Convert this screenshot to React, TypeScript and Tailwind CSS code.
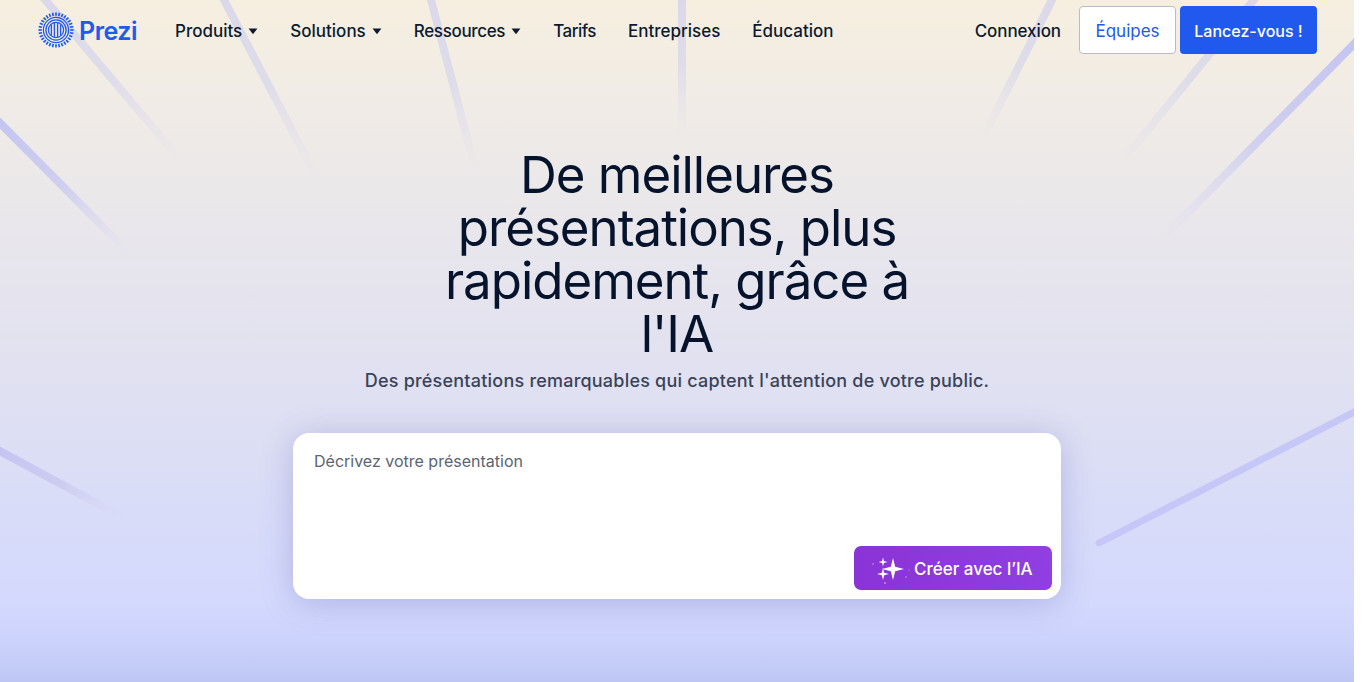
const navItems = [
  { label: "Produits", caret: true, tracking: "tracking-normal" },
  { label: "Solutions", caret: true, tracking: "tracking-normal" },
  { label: "Ressources", caret: true, tracking: "tracking-[-0.02em]" },
  { label: "Tarifs", caret: false, tracking: "tracking-[-0.03em]" },
  { label: "Entreprises", caret: false, tracking: "tracking-normal" },
  { label: "Éducation", caret: false, tracking: "tracking-normal" },
]

// x1 y1 is the strong end, x2 y2 is the end that fades out
const rays = [
  { id: "a", x1: 42, y1: -4, x2: 182, y2: 162, o: 0.55 },
  { id: "b", x1: 222, y1: -4, x2: 316, y2: 176, o: 0.55 },
  { id: "c", x1: 430, y1: -4, x2: 476, y2: 172, o: 0.55 },
  { id: "d", x1: 682, y1: -4, x2: 682, y2: 136, o: 0.55 },
  { id: "e", x1: 1054, y1: -4, x2: 983, y2: 138, o: 0.55 },
  { id: "f", x1: 1257, y1: -4, x2: 1120, y2: 164, o: 0.55 },
  { id: "g", x1: 1358, y1: 40, x2: 1163, y2: 238, o: 1 },
  { id: "h", x1: -4, y1: 119, x2: 128, y2: 252, o: 1 },
  { id: "i", x1: -4, y1: 449, x2: 124, y2: 518, o: 1 },
]

const Rays = () => (
  <svg className="absolute inset-0 h-full w-full" viewBox="0 0 1354 682" fill="none">
    <defs>
      {rays.map((r) => (
        <linearGradient key={r.id} id={`ray-${r.id}`} gradientUnits="userSpaceOnUse" x1={r.x1} y1={r.y1} x2={r.x2} y2={r.y2}>
          <stop offset="0" stopColor="#c4c4f2" stopOpacity={r.o} />
          <stop offset="0.5" stopColor="#c8c8f0" stopOpacity={r.o * 0.8} />
          <stop offset="1" stopColor="#d4d4f0" stopOpacity="0" />
        </linearGradient>
      ))}
    </defs>
    {rays.map((r) => (
      <line key={r.id} x1={r.x1} y1={r.y1} x2={r.x2} y2={r.y2} stroke={`url(#ray-${r.id})`} strokeWidth="8" />
    ))}
    <line x1="1360" y1="409" x2="1099" y2="543" stroke="#c6c7f6" strokeWidth="7" strokeLinecap="round" />
  </svg>
)

const Logo = () => {
  const ticks = Array.from({ length: 32 }, (_, i) => (i * 360) / 32)
  return (
    <svg width="36" height="36" viewBox="0 0 36 36" fill="none" stroke="#2159ee">
      {ticks.map((deg) => (
        <line key={deg} x1="18" y1="0.4" x2="18" y2="3.8" strokeWidth="1.7" transform={`rotate(${deg} 18 18)`} />
      ))}
      <circle cx="18" cy="18" r="12.6" strokeWidth="1.3" />
      <circle cx="18" cy="18" r="10.1" strokeWidth="1.3" />
      <circle cx="18" cy="18" r="7.6" strokeWidth="1.3" />
      <path d="M13.4 12.6v10.8M16.4 10.6v14.8M19.6 10.6v14.8M22.6 12.6v10.8" strokeWidth="1.4" />
    </svg>
  )
}

const Caret = () => (
  <svg width="10" height="6" viewBox="0 0 10 6" className="mb-[2px]">
    <path d="M0.6 0.4h8.8L5.8 5.2a1 1 0 0 1-1.6 0z" fill="#0c1a30" />
  </svg>
)

const star = (cx: number, cy: number, r: number) => {
  const k = r * 0.2
  return `M${cx} ${cy - r}L${cx + k} ${cy - k}L${cx + r} ${cy}L${cx + k} ${cy + k}L${cx} ${cy + r}L${cx - k} ${cy + k}L${cx - r} ${cy}L${cx - k} ${cy - k}Z`
}

const Sparkles = () => (
  <svg width="40" height="40" viewBox="0 0 40 40" fill="#fff">
    <path d={star(23, 21, 11)} />
    <path d={star(13, 14, 4.5)} />
    <path d={star(13, 26, 6)} />
    <circle cx="3" cy="16" r="1" opacity="0.3" />
    <circle cx="15" cy="35" r="1" opacity="0.45" />
    <circle cx="36" cy="29" r="1" opacity="0.3" />
    <circle cx="39" cy="22" r="0.8" opacity="0.25" />
  </svg>
)

export default function App() {
  return (
    <div className="flex h-[682px] w-full overflow-hidden bg-white font-['Inter',sans-serif] text-[#0c1a30]">
      <div className="relative h-full flex-1 overflow-hidden bg-[linear-gradient(180deg,#f6efe0_0px,#ebe8ea_190px,#dfe0f2_400px,#d4d9fd_600px,#ccd3fc_640px,#bec7f4_682px)]">
        <Rays />

        <header className="relative flex h-[60px] items-center pl-[38px] pr-[37px]">
          <a className="flex items-center gap-[5px]">
            <Logo />
            <span className="pt-[2px] text-[25px] font-semibold leading-none tracking-[-0.02em] text-[#2159ee]">Prezi</span>
          </a>
          <nav className="ml-[38px] flex items-center gap-[32px] pt-[4px]">
            {navItems.map((item) => (
              <a key={item.label} className={`flex items-center gap-[6px] text-[17px] font-medium ${item.tracking}`}>
                {item.label}
                {item.caret && <Caret />}
              </a>
            ))}
          </nav>
          <a className="ml-auto mr-[18px] pt-[4px] text-[17px] font-medium tracking-[-0.005em]">Connexion</a>
          <a className="flex h-[48px] w-[97px] items-center justify-center rounded-[4px] border border-[#b9bcc4] bg-white pt-[3px] text-[17px] text-[#2159ee]">
            Équipes
          </a>
          <a className="ml-[4px] flex h-[48px] w-[137px] items-center justify-center rounded-[4px] bg-[#2159ee] pt-[2px] text-[16px] font-medium text-white">
            Lancez-vous !
          </a>
        </header>

        <main className="relative flex flex-col items-center">
          <h1 className="mt-[88px] w-[480px] text-center text-[51px] font-normal leading-[53px] tracking-[-0.02em] text-[#05142c]">
            De meilleures présentations, plus rapidement, grâce à l'IA
          </h1>
          <p className="mt-[7px] text-[18px] font-medium leading-[28px] tracking-[0.012em] text-[#3b4358]">
            Des présentations remarquables qui captent l'attention de votre public.
          </p>

          <div className="mt-[38px] flex h-[166px] w-[768px] flex-col rounded-[16px] bg-white pb-[9px] pl-[21px] pr-[9px] pt-[18px] shadow-[0_4px_32px_rgba(80,80,170,0.28)]">
            <p className="text-[16px] leading-[20px] text-[#5c6373]">Décrivez votre présentation</p>
            <button className="mt-auto flex h-[44px] w-[198px] items-center self-end rounded-[7px] bg-[linear-gradient(80deg,#8a33d6,#903fe2)] pl-[16px] text-[17px] font-medium text-white">
              <Sparkles />
              <span className="ml-[4px] pt-[3px]">Créer avec l’IA</span>
            </button>
          </div>
        </main>
      </div>
      <div className="h-full w-3 bg-white" />
    </div>
  )
}
